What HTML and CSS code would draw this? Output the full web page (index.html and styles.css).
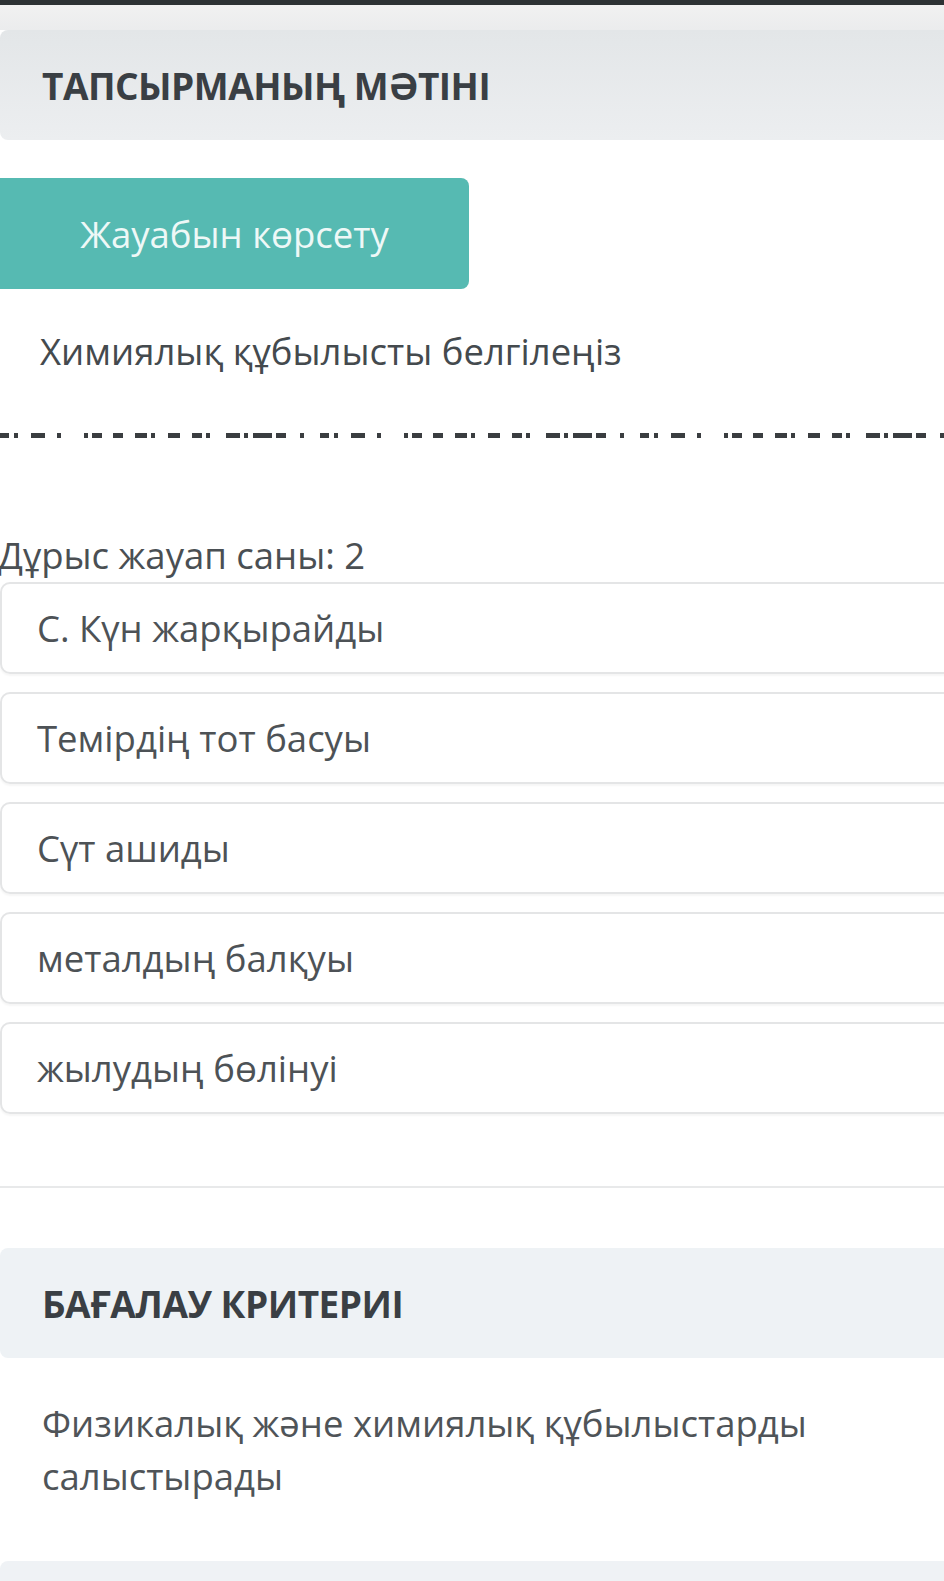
FILE: index.html
```html
<!DOCTYPE html>
<html lang="kk">
<head>
<meta charset="utf-8">
<title>Тапсырма</title>
<link rel="stylesheet" href="styles.css">
</head>
<body>
<div class="topbar"></div>
<div class="topgap"></div>
<div class="panel-head"><h2>ТАПСЫРМАНЫҢ МӘТІНІ</h2></div>
<div class="task">
  <button class="show-btn">Жауабын көрсету</button>
  <p class="question">Химиялық құбылысты белгілеңіз</p>
  <div class="dash-line"></div>
  <p class="count">Дұрыс жауап саны: 2</p>
  <ul class="options">
    <li class="option">С. Күн жарқырайды</li>
    <li class="option">Темірдің тот басуы</li>
    <li class="option">Сүт ашиды</li>
    <li class="option">металдың балқуы</li>
    <li class="option">жылудың бөлінуі</li>
  </ul>
</div>
<div class="divider"></div>
<div class="panel-head panel-head--light"><h2>БАҒАЛАУ КРИТЕРИІ</h2></div>
<p class="criteria">Физикалық және химиялық құбылыстарды<br>салыстырады</p>
<div class="panel-foot"></div>
</body>
</html>
```
FILE: styles.css
```css
html, body {
  margin: 0;
  padding: 0;
  background: #ffffff;
  font-family: "Open Sans", "Noto Sans", sans-serif;
  overflow: hidden;
}
.topbar {
  height: 5px;
  background: #2d3234;
}
.topgap {
  height: 25px;
  background: linear-gradient(#f1f1f1, #ebeced);
}
.panel-head {
  height: 110px;
  display: flex;
  align-items: center;
  padding-left: 42px;
  background: linear-gradient(#e3e6e8, #eceef0);
  border-radius: 8px 0 0 8px;
}
.panel-head h2 {
  margin: 0;
  font-size: 37px;
  font-weight: 700;
  color: #3a3f44;
  letter-spacing: -0.5px;
}
.panel-head--light {
  margin-top: 60px;
  background: #eef2f5;
}
.task {
  padding-top: 38px;
}
.show-btn {
  display: block;
  width: 469px;
  height: 111px;
  border: none;
  border-radius: 0 8px 8px 0;
  background: #56bab2;
  color: #eef8f7;
  font-family: inherit;
  font-size: 36.5px;
  padding: 0;
}
.question {
  margin: 37px 0 0;
  padding-left: 40px;
  font-size: 36.5px;
  line-height: 50px;
  color: #444a4e;
}
.dash-line {
  margin-top: 57px;
  height: 5px;
  background: repeating-linear-gradient(90deg,
    #3a3d40 0 9px, transparent 9px 14px,
    #3a3d40 14px 18px, transparent 18px 31px,
    #3a3d40 31px 45px, transparent 45px 57px,
    #3a3d40 57px 61px, transparent 61px 84px,
    #3a3d40 84px 88px, transparent 88px 92px,
    #3a3d40 92px 102px, transparent 102px 113px,
    #3a3d40 113px 123px, transparent 123px 135px,
    #3a3d40 135px 147px, transparent 147px 151px,
    #3a3d40 151px 155px, transparent 155px 168px,
    #3a3d40 168px 180px, transparent 180px 192px,
    #3a3d40 192px 202px, transparent 202px 206px,
    #3a3d40 206px 210px, transparent 210px 226px,
    #3a3d40 226px 240px, transparent 240px 244px,
    #3a3d40 244px 248px, transparent 248px 253px,
    #3a3d40 253px 272px, transparent 272px 276px,
    #3a3d40 276px 286px, transparent 286px 300px,
    #3a3d40 300px 304px, transparent 304px 320px);
}
.count {
  margin: 95px 0 0 -2px;
  font-size: 36.5px;
  line-height: 44px;
  color: #4a4f53;
}
.options {
  list-style: none;
  margin: 5px 0 0;
  padding: 0;
  display: flex;
  flex-direction: column;
  gap: 18px;
}
.option {
  height: 92px;
  box-sizing: border-box;
  margin-right: -20px;
  border: 2px solid #e4e5e6;
  border-radius: 10px;
  box-shadow: 0 2px 2px rgba(0,0,0,0.04);
  display: flex;
  align-items: center;
  padding-left: 35px;
  font-size: 36.5px;
  color: #4d5256;
}
.divider {
  margin-top: 72px;
  height: 2px;
  background: #e8e9ea;
}
.criteria {
  margin: 39px 0 0;
  padding-left: 42px;
  font-size: 36.5px;
  line-height: 53px;
  color: #4f5458;
}
.panel-foot {
  margin-top: 58px;
  height: 40px;
  background: #eff2f5;
  border-radius: 8px 0 0 0;
}
```
